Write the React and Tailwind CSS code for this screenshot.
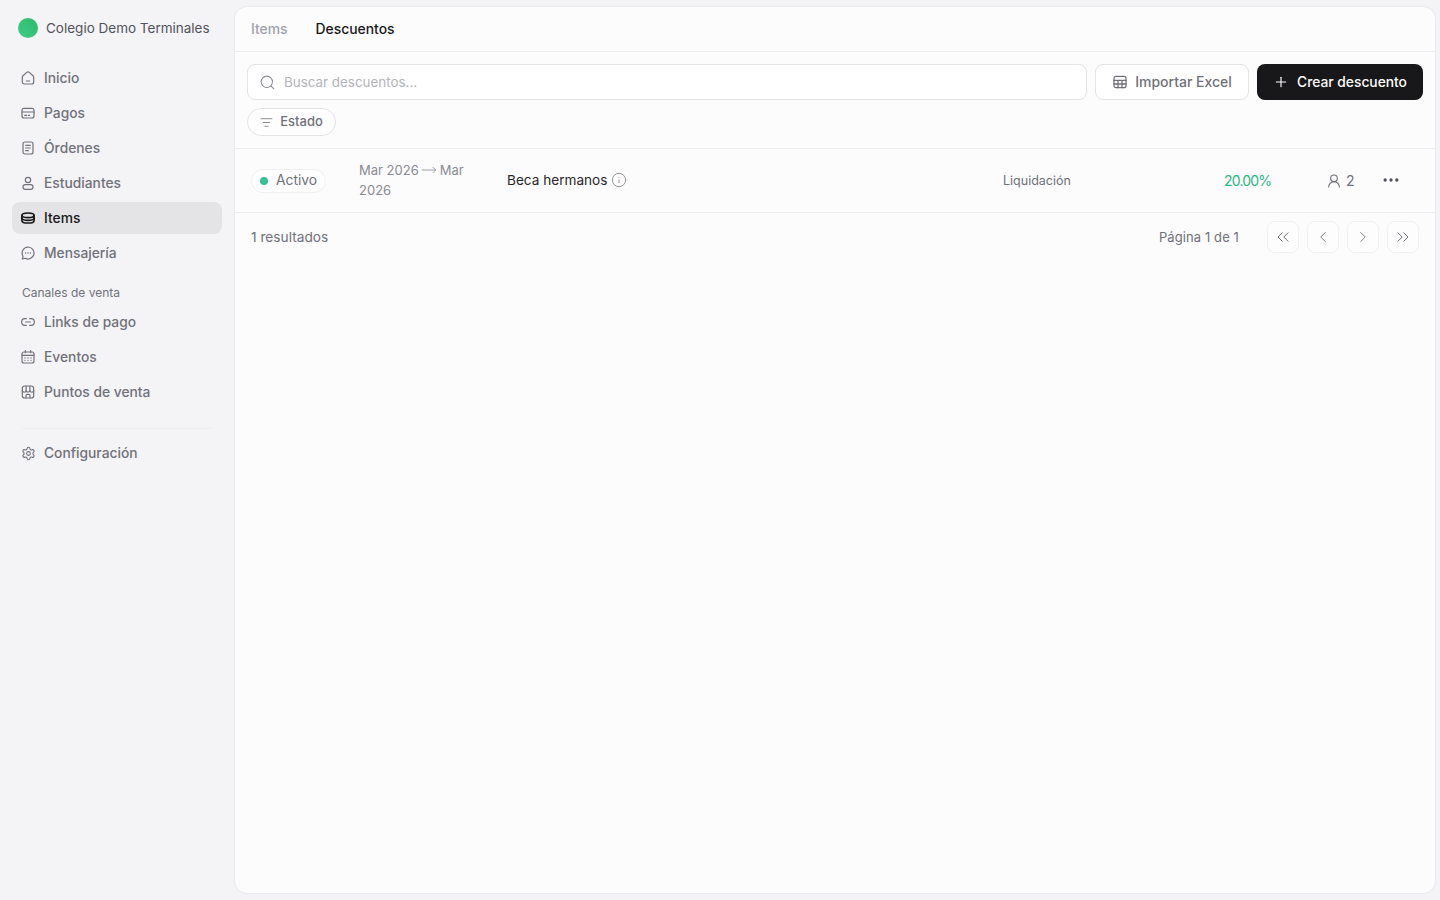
import React from "react";
import {
  ChevronLeft,
  ChevronRight,
  ChevronsLeft,
  ChevronsRight,
  Ellipsis,
  Info,
  Plus,
  Search,
  Settings,
  UserRound,
  ListFilter,
  MoveRight,
} from "lucide-react";

// iconos del menu, dibujados a mano
const Svg = ({ children, size = 16, stroke = 1.8, className }) => (
  <svg
    width={size}
    height={size}
    viewBox="0 0 24 24"
    fill="none"
    stroke="currentColor"
    strokeWidth={stroke}
    strokeLinecap="round"
    strokeLinejoin="round"
    className={className}
  >
    {children}
  </svg>
);

const HomeIcon = () => (
  <Svg>
    <path d="M10 3.6a3 3 0 0 1 4 0l5.5 5a3 3 0 0 1 1 2.2V18a3 3 0 0 1-3 3h-11a3 3 0 0 1-3-3v-7.200a3 3 0 0 1 1-2.200z" />
    <path d="M9.500 16.500h5" />
  </Svg>
);

const CardIcon = () => (
  <Svg>
    <rect x="3" y="5" width="18" height="14.500" rx="3" />
    <path d="M3 10.500h18M7 15.500h3M12.500 15.500h2" />
  </Svg>
);

const OrderIcon = () => (
  <Svg>
    <rect x="4.500" y="3" width="15" height="18" rx="3" />
    <path d="M8.500 8h7M8.500 12h7M8.500 16h4" />
  </Svg>
);

const PersonIcon = () => (
  <Svg>
    <circle cx="12" cy="7.500" r="4" />
    <rect x="4.500" y="14.500" width="15" height="7" rx="3.500" />
  </Svg>
);

const LayersIcon = () => (
  <Svg stroke={2.500}>
    <ellipse cx="12" cy="8" rx="9" ry="3.500" />
    <path d="M3 8c-.6 1 0 1.800 0 4 0 1.900 4 3.500 9 3.500s9-1.600 9-3.500c0-2.200.6-3 0-4" />
    <path d="M3 12c-.6 1 0 1.800 0 4 0 1.900 4 3.500 9 3.500s9-1.600 9-3.500c0-2.200.6-3 0-4" />
  </Svg>
);

const MessageIcon = () => (
  <Svg>
    <path d="M12 3a9 9 0 1 1-4.300 16.900L3.500 21l1.100-4.200A9 9 0 0 1 12 3z" />
    <path d="M8.300 12h.01M12 12h.01M15.700 12h.01" strokeWidth="2.200" />
  </Svg>
);

const LinkIcon = () => (
  <Svg>
    <path d="M9.500 7H7.500a5 5 0 0 0 0 10h2M14.500 7h2a5 5 0 0 1 0 10h-2M8.500 12h7" />
  </Svg>
);

const CalendarIcon = () => (
  <Svg>
    <rect x="3" y="4.500" width="18" height="16.500" rx="3" />
    <path d="M3 9.500h18M8 2.500v3M16 2.500v3" />
    <path d="M7.500 13.500h.01M12 13.500h.01M16.500 13.500h.01M7.500 17h.01M12 17h.01M16.500 17h.01" strokeWidth="2" />
  </Svg>
);

const StoreIcon = () => (
  <Svg>
    <rect x="3.500" y="3" width="17" height="18" rx="3.500" />
    <path d="M3.500 9.500a2.800 2.800 0 0 0 5.700 0 2.800 2.800 0 0 0 5.600 0 2.800 2.800 0 0 0 5.700 0" />
    <path d="M9.200 3v6.500M14.800 3v6.500M9 21v-3.500a2 2 0 0 1 2-2h2a2 2 0 0 1 2 2V21" />
  </Svg>
);

const GearIcon = () => <Settings size={15} strokeWidth={1.7} />;

const GridIcon = () => (
  <Svg stroke={1.900}>
    <rect x="3" y="3.500" width="18" height="17" rx="3" />
    <path d="M3 9.500h18M3 15h18M9 9.500v11M15 9.500v11" />
  </Svg>
);

const mainLinks = [
  { label: "Inicio", icon: HomeIcon },
  { label: "Pagos", icon: CardIcon },
  { label: "Órdenes", icon: OrderIcon },
  { label: "Estudiantes", icon: PersonIcon },
  { label: "Items", icon: LayersIcon, active: true },
  { label: "Mensajería", icon: MessageIcon },
];

const channelLinks = [
  { label: "Links de pago", icon: LinkIcon },
  { label: "Eventos", icon: CalendarIcon },
  { label: "Puntos de venta", icon: StoreIcon },
];

const NavItem = ({ label, icon: Icon, active }) => (
  <div
    className={
      "flex h-8 items-center gap-2 rounded-lg pl-2 text-[13.8px] font-medium " +
      (active ? "bg-[#e4e4e6] text-[#18181b]" : "text-[#71717a]")
    }
  >
    <span className="flex w-4 justify-center">
      <Icon />
    </span>
    <span>{label}</span>
  </div>
);

const PageButton = ({ icon: Icon, size = 18 }) => (
  <button
    type="button"
    className="flex h-8 w-8 items-center justify-center rounded-lg border border-[#f0f0f1] bg-[#fdfdfd] text-[#71717a]"
  >
    <Icon size={size} strokeWidth={1.2} />
  </button>
);

const App = () => {
  return (
    <div className="flex h-[900px] bg-[#f4f4f6] font-['Inter',sans-serif]">
      <aside className="flex w-[235px] shrink-0 flex-col pl-3 pr-[13px]">
        <div className="mt-[18px] flex h-5 items-center gap-2 pl-1.5">
          <div className="h-5 w-5 rounded-full bg-linear-to-tr from-[#3ecb85] to-[#2bbb6c]" />
          <span className="text-[13.5px] text-[#52525b]">Colegio Demo Terminales</span>
        </div>
        <nav className="mt-6 flex flex-col gap-[3px]">
          {mainLinks.map((link) => (
            <NavItem key={link.label} {...link} />
          ))}
        </nav>
        <p className="mt-4 pl-2.5 text-xs leading-4 text-[#71717a]">Canales de venta</p>
        <div className="mt-[5px] flex flex-col gap-[3px]">
          {channelLinks.map((link) => (
            <NavItem key={link.label} {...link} />
          ))}
        </div>
        <div className="mx-2.5 mt-5 border-t border-[#eeeef0]" />
        <div className="mt-2">
          <NavItem label="Configuración" icon={GearIcon} />
        </div>
      </aside>

      <main className="my-[7px] mr-[5px] flex flex-1 flex-col rounded-xl bg-[#fcfcfc] shadow-[0_0_2px_rgba(0,0,0,0.12)]">
        <div className="flex h-[45px] items-center gap-7 border-b border-[#ececee] px-4 text-[13.9px] font-medium">
          <span className="text-[#a1a1aa]">Items</span>
          <span className="text-[#18181b]">Descuentos</span>
        </div>

        <div className="flex flex-col gap-2 border-b border-[#ececee] p-3">
          <div className="flex gap-2">
            <div className="flex h-9 flex-1 items-center gap-2 rounded-lg border border-[#e4e4e7] bg-white pl-[11px] text-[13.4px] text-[#b4b4bb]">
              <Search size={17} strokeWidth={1.5} className="text-[#8b8b93]" />
              <span>Buscar descuentos...</span>
            </div>
            <button
              type="button"
              className="flex h-9 w-[154px] items-center justify-center gap-[7px] rounded-lg border border-[#e4e4e7] bg-white text-sm font-medium text-[#71717a]"
            >
              <GridIcon />
              Importar Excel
            </button>
            <button
              type="button"
              className="flex h-9 w-[166px] items-center justify-center gap-2 rounded-lg bg-[#18181b] text-[13.8px] font-medium text-white"
            >
              <Plus size={16} strokeWidth={1.7} />
              Crear descuento
            </button>
          </div>
          <button
            type="button"
            className="flex h-7 w-[89px] items-center justify-center gap-[7px] rounded-full border border-[#e4e4e7] bg-white text-[13px] font-medium text-[#71717a]"
          >
            <ListFilter size={13} strokeWidth={1.5} />
            Estado
          </button>
        </div>

        <div className="flex h-16 items-center border-b border-[#ececee] pl-4">
          <div className="w-[108px] shrink-0">
            <span className="flex h-6 w-[75px] items-center gap-2 rounded-full border border-[#f0f0f1] bg-white pl-2 text-[13.8px] text-[#71717a]">
              <span className="h-2 w-2 rounded-full bg-[#34c08f]" />
              Activo
            </span>
          </div>
          <div className="-mt-0.5 w-[148px] shrink-0 text-[13px] leading-5 text-[#8b8b93]">
            <div className="flex items-center gap-[2.500px]">
              <span>Mar 2026</span>
              <MoveRight size={16} strokeWidth={1.2} />
              <span>Mar</span>
            </div>
            <div>2026</div>
          </div>
          <div className="flex w-[496px] shrink-0 items-center gap-1 text-[13.6px] text-[#27272a]">
            Beca hermanos
            <Info size={16} strokeWidth={1.4} className="text-[#8b8b93]" />
          </div>
          <div className="mt-0.5 w-[221px] shrink-0 text-[12.5px] text-[#71717a]">Liquidación</div>
          <div className="w-[102px] shrink-0 text-sm tracking-[-0.8px] text-[#2bb685]">20.00%</div>
          <div className="flex w-[55px] shrink-0 items-center gap-1 text-sm text-[#71717a]">
            <UserRound size={16} strokeWidth={1.7} />2
          </div>
          <Ellipsis size={20} strokeWidth={2} className="-mt-0.5 text-[#52525b]" />
        </div>

        <div className="flex h-12 items-center justify-between px-4 text-[13px] tracking-[0.1px] text-[#71717a]">
          <span className="text-[13.7px] tracking-normal">1 resultados</span>
          <div className="flex items-center gap-2">
            <span className="mr-5 mt-0.5">Página 1 de 1</span>
            <PageButton icon={ChevronsLeft} size={20} />
            <PageButton icon={ChevronLeft} />
            <PageButton icon={ChevronRight} />
            <PageButton icon={ChevronsRight} size={20} />
          </div>
        </div>
      </main>
    </div>
  );
};

export default App;
